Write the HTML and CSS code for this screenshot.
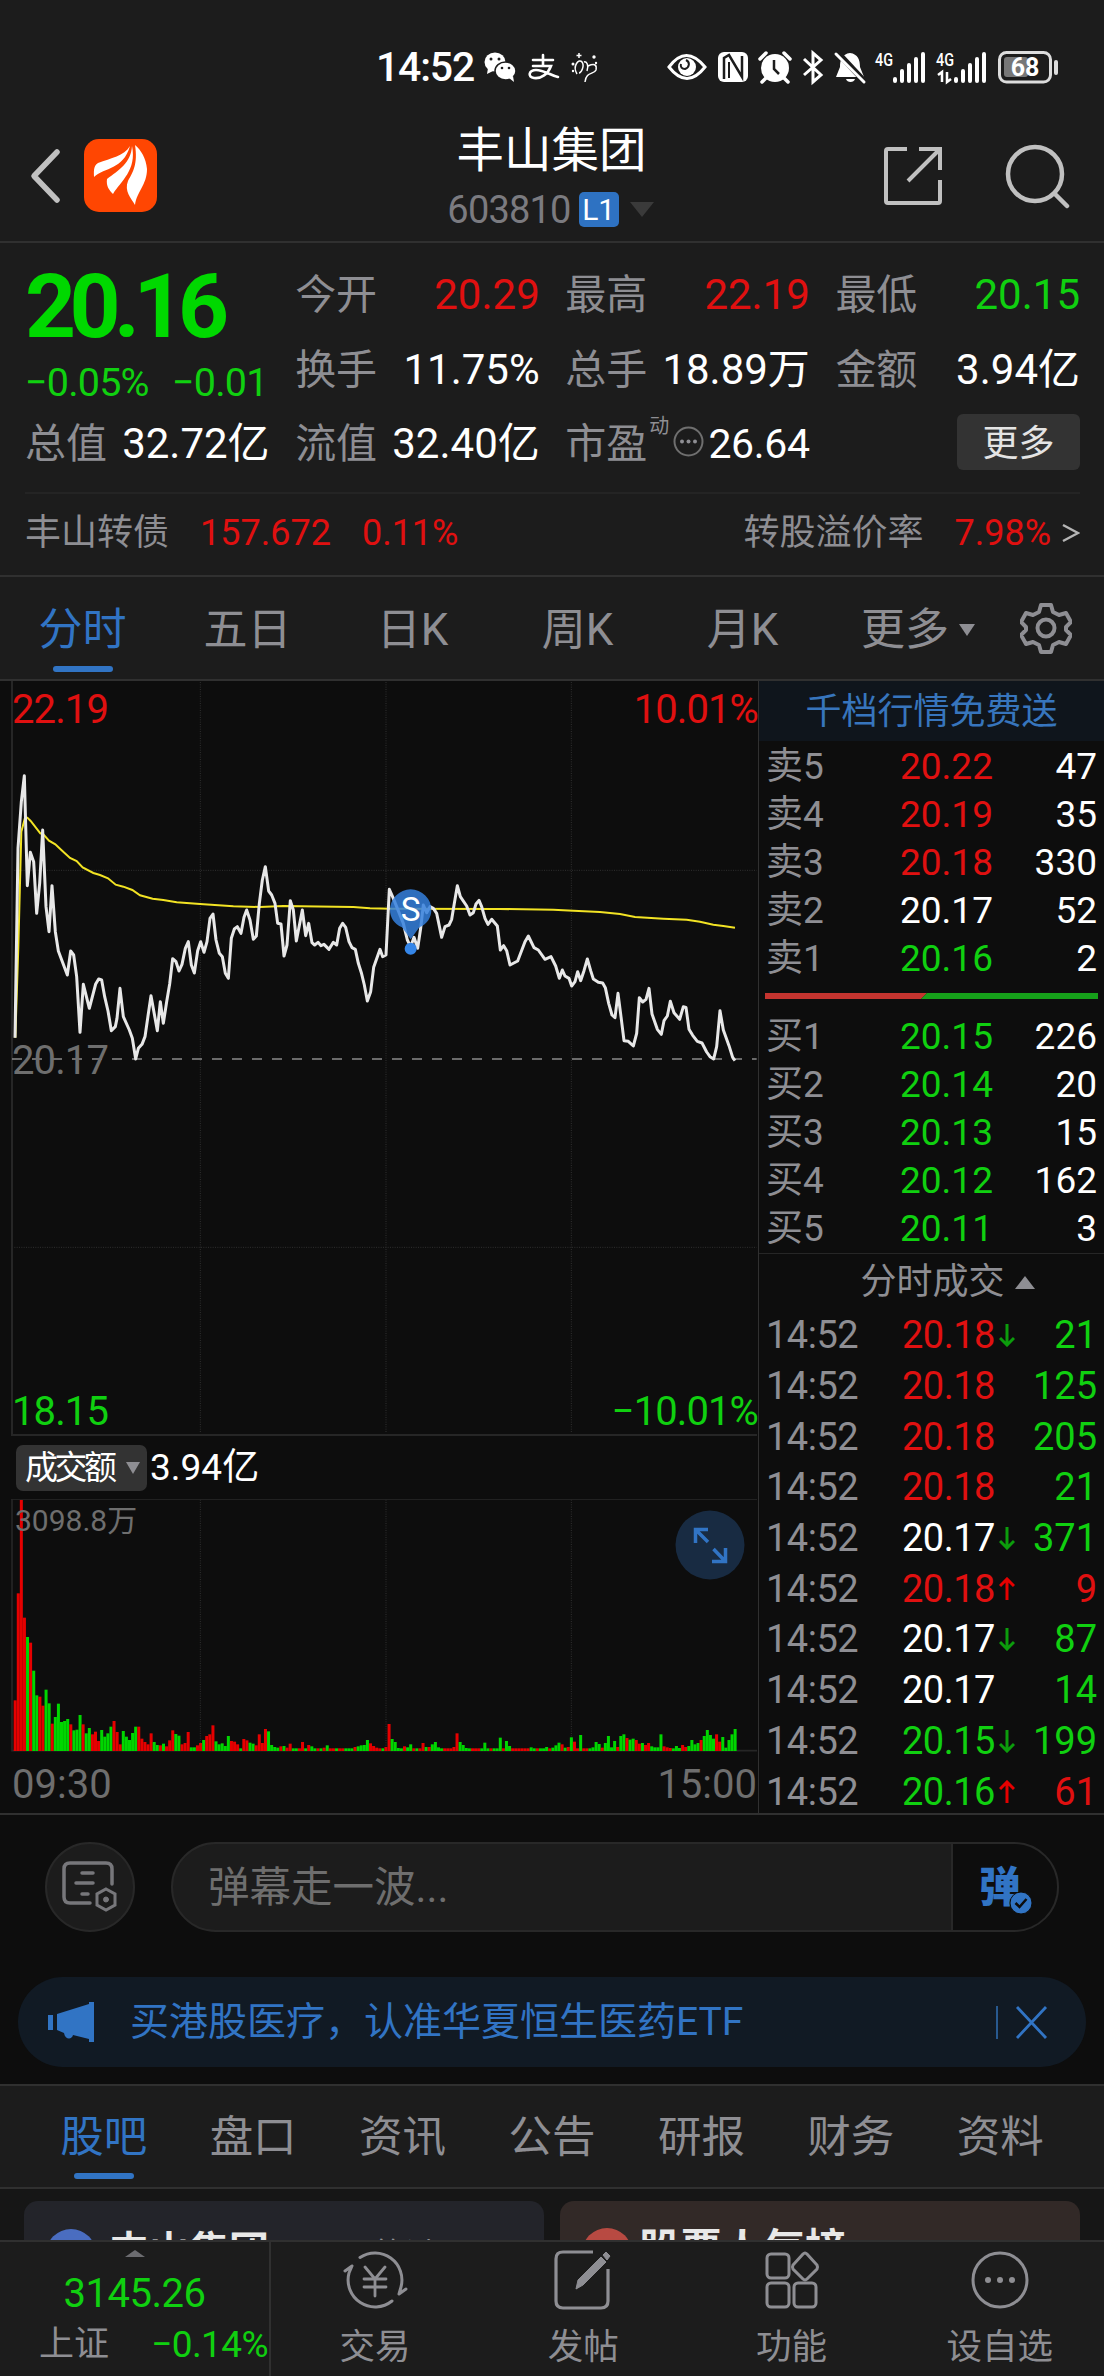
FILE: index.html
```html
<!DOCTYPE html>
<html lang="zh-CN">
<head>
    <meta charset="UTF-8">
    <meta name="viewport" content="width=device-width, initial-scale=1.0">
    <title>丰山集团 603810</title>
    <link rel="stylesheet" href="styles.css">
</head>
<body>
    <div class="statusbar">
        <span class="clock">14:52</span>
        <svg class="status-left" width="120" height="44" viewBox="480 45 120 44">
            <ellipse cx="495" cy="62" rx="10.5" ry="9.5" fill="#fff"/>
            <path d="M488 68l-1 6 6-3z" fill="#fff"/>
            <ellipse cx="505.500" cy="71" rx="10.500" ry="9" fill="#fff" stroke="#1c1c1c" stroke-width="1.500"/>
            <path d="M509 78l5 4-1-6z" fill="#fff"/>
            <g fill="#1c1c1c"><circle cx="491" cy="59" r="1.500"/><circle cx="499" cy="59" r="1.500"/><circle cx="502" cy="68" r="1.300"/><circle cx="509" cy="68" r="1.300"/></g>
            <g fill="none" stroke="#fff" stroke-width="2.600" stroke-linecap="round">
                <path d="M533 60h20M543 55v10M533 66h18c-3 8-10 13-17 12-7-1-5-8 2-8 8 0 14 5 22 7"/>
            </g>
            <g fill="none" stroke="#fff" stroke-width="1.500">
                <path d="M577 74c-5-8 2-16 5-12s-1 11-3 11M584 62c3-1 5 4 3 9M588 66c7-3 9-1 8 4-2 5-10 1-11 12"/>
                <path d="M579 53v5M576.500 55.500h5"/>
            </g>
            <g fill="#fff"><circle cx="573" cy="64" r="1.500"/><circle cx="594" cy="57" r="1.700"/><circle cx="573" cy="71" r="1.200"/><circle cx="596" cy="63" r="1.200"/></g>
        </svg>
        <svg class="status-right" width="400" height="44" viewBox="664 45 400 44">
            <path d="M669 67q17-23 36 0q-18 23-36 0z" fill="none" stroke="#fff" stroke-width="3"/>
            <circle cx="687" cy="67" r="9" fill="#fff"/>
            <path d="M686 60c4 2 4 7-1 9-3 0-5-2-4-5" fill="none" stroke="#1c1c1c" stroke-width="2"/>
            <rect x="718" y="52" width="30" height="30" rx="6" fill="#fff"/>
            <path d="M724 79V58l5-3 13 22 0 0V56" fill="none" stroke="#1c1c1c" stroke-width="2.500"/>
            <path d="M729 62v16" fill="none" stroke="#1c1c1c" stroke-width="2"/>
            <circle cx="775" cy="68" r="14" fill="#fff"/>
            <path d="M774 60v9l5 5" fill="none" stroke="#1c1c1c" stroke-width="2.500"/>
            <path d="M760 59l6-6M790 59l-6-6M766 78l-4 4M784 78l4 4" stroke="#fff" stroke-width="3.500" stroke-linecap="round"/>
            <path d="M804 59l17 16-8 7V53l8 7-17 15" fill="none" stroke="#fff" stroke-width="3"/>
            <path d="M850 53c8 1 10 7 10 14l4 10h-28l4-10c0-7 2-13 10-14z" fill="#fff"/>
            <path d="M846 79h9c-1 4-8 4-9 0z" fill="#fff"/>
            <path d="M837 52l29 31" stroke="#1c1c1c" stroke-width="6"/>
            <path d="M836 54l28 28" stroke="#fff" stroke-width="3" stroke-linecap="round"/>
            <text x="875" y="66" class="net" textLength="18" lengthAdjust="spacingAndGlyphs">4G</text>
            <path d="M895 79v2M902 71v10M909 65v16M916 59v22M923 54v27" stroke="#fff" stroke-width="4" stroke-linecap="round"/>
            <text x="936" y="66" class="net" textLength="18" lengthAdjust="spacingAndGlyphs">4G</text>
            <path d="M956 79v2M963 71v10M970 65v16M977 59v22M984 54v27" stroke="#fff" stroke-width="4" stroke-linecap="round"/>
            <path d="M938 75l4-3v10M951 79l-4 3v-10" fill="none" stroke="#fff" stroke-width="2.500"/>
            <rect x="999.500" y="52.500" width="51" height="29.500" rx="7" fill="none" stroke="#ddd" stroke-width="3"/>
            <rect x="1004" y="57" width="24" height="20" rx="3" fill="#777"/>
            <rect x="1054" y="60" width="4" height="15" rx="2" fill="#ddd"/>
            <text x="1025" y="76" class="battery">68</text>
        </svg>
    </div>

    <header class="header">
        <div class="header-side">
            <svg width="34" height="56" viewBox="0 0 34 56"><path d="M29 4L6 28l23 24" fill="none" stroke="#c0c0c0" stroke-width="5.500" stroke-linecap="round" stroke-linejoin="round"/></svg>
            <svg class="logo" width="73" height="73" viewBox="0 0 73 73">
                <rect width="73" height="73" rx="15" fill="#ff4602"/>
                <path d="M46 7C40 17 27 19 14 24c-5 3-4 9-4 14 11-10 29-7 36-31z" fill="#fff"/>
                <path d="M48 7c-1 17-13 24-25 33-1 7 2 11 6 15 8-13 24-24 19-48z" fill="#fff"/>
                <path d="M51 6c3 19-2 27-7 36-4 10 3 17 7 24 2-14 12-20 12-36-1-11-6-19-12-24z" fill="#fff"/>
            </svg>
        </div>
        <div class="header-title">
            <h1>丰山集团</h1>
            <div class="code">603810<span class="badge">L1</span><i class="tri-down"></i></div>
        </div>
        <div class="header-side right">
            <svg width="60" height="60" viewBox="0 0 60 60" fill="none" stroke="#c0c0c0" stroke-width="4"><path d="M24 3H5q-2 0-2 2v50q0 2 2 2h50q2 0 2-2V34M57 24V3H36M57 3L25 35"/></svg>
            <svg width="66" height="66" viewBox="0 0 66 66" fill="none" stroke="#c0c0c0" stroke-width="4.500" stroke-linecap="round"><circle cx="31" cy="31" r="27"/><path d="M51 51l12 12"/></svg>
        </div>
    </header>

    <section class="quote">
        <div class="quote-grid">
            <div class="price-box green">
                <div class="price">20.16</div>
                <div class="change"><span>−0.05%</span><span>−0.01</span></div>
            </div>
            <div class="item"><label>今开</label><b class="red">20.29</b></div>
            <div class="item"><label>最高</label><b class="red">22.19</b></div>
            <div class="item"><label>最低</label><b class="green">20.15</b></div>
            <div class="item"><label>换手</label><b>11.75%</b></div>
            <div class="item"><label>总手</label><b>18.89万</b></div>
            <div class="item"><label>金额</label><b>3.94亿</b></div>
            <div class="item"><label>总值</label><b>32.72亿</b></div>
            <div class="item"><label>流值</label><b>32.40亿</b></div>
            <div class="item"><label>市盈<sup>动</sup></label>
                <svg class="info" width="31" height="31" viewBox="0 0 31 31"><circle cx="15.500" cy="15.500" r="14" fill="none" stroke="#6f6f6f" stroke-width="2"/><g fill="#8e8e93"><circle cx="9" cy="15.500" r="2"/><circle cx="15.500" cy="15.500" r="2"/><circle cx="22" cy="15.500" r="2"/></g></svg>
                <b class="tight">26.64</b></div>
            <div class="item end"><button class="more">更多</button></div>
        </div>
        <div class="bond">
            <label>丰山转债</label><span class="red">157.672</span><span class="red">0.11%</span>
            <label class="push">转股溢价率</label><span class="red">7.98%</span>
            <svg width="18" height="20" viewBox="0 0 18 20"><path d="M1 2l15 8-15 8" fill="none" stroke="#b5b5b5" stroke-width="2.500"/></svg>
        </div>
    </section>

    <nav class="tabs">
        <a class="tab active">分时</a>
        <a class="tab">五日</a>
        <a class="tab">日K</a>
        <a class="tab">周K</a>
        <a class="tab">月K</a>
        <a class="tab wide">更多<i class="tri-small"></i></a>
        <svg width="52" height="52" viewBox="0 0 52 52" fill="none" stroke="#8e8e93" stroke-width="4" stroke-linejoin="round">
            <path d="M21 3h10l2 7 6 3 7-2 5 9-5 5v3l5 5-5 9-7-2-6 3-2 7H21l-2-7-6-3-7 2-5-9 5-5v-3l-5-5 5-9 7 2 6-3z"/>
            <circle cx="26" cy="26" r="8.500"/>
        </svg>
    </nav>

    <main class="market">
        <div class="charts">
            <div class="chart">
                <svg width="758" height="755" viewBox="0 3 2274 2265">
                    <g class="grid">
                        <path d="M601 6V2260M1158 6V2260M1714 6V2260M36 571H2270M36 1702H2270"/>
                    </g>
                    <path d="M36 3V2265M33 2265H2271" fill="none" stroke="#262626" stroke-width="6"/>
                    <path d="M36 1137H2270" stroke="#8a8a8a" stroke-width="5" stroke-dasharray="30 30"/>
                    <polyline class="avg" points="46,1073 55,800 64,455 75,413 82,413 92,423 121,460 130,463 147,482 166,493 184,510 210,534 230,543 248,562 280,579 300,585 324,595 347,614 370,620 397,630 420,646 458,656 490,660 530,667 600,672 700,679 780,681 850,678 1060,681 1110,685 1170,686 1500,687 1660,689 1720,692 1800,696 1860,702 1905,711 1990,716 2060,719 2100,725 2140,734 2170,738 2205,743"/>
                    <polyline class="line" points="45,1073 54,505 64,365 73,287 82,617 91,517 101,545 110,700 119,610 128,450 138,680 147,755 156,617 166,755 175,813 202,885 212,813 221,825 230,890 240,1057 250,913 268,985 287,912 296,897 305,900 314,950 324,993 334,1052 346,1040 351,1015 360,925 370,1010 388,1050 397,1075 407,1137 415,1105 426,1093 435,1070 444,1008 453,947 472,1052 481,965 490,1030 500,965 509,912 518,836 528,845 537,873 546,853 556,805 565,785 574,855 583,879 593,812 602,785 612,817 621,785 630,715 639,702 648,780 658,820 667,830 676,880 685,895 694,775 703,747 712,740 723,760 732,712 740,690 750,720 760,778 769,768 778,670 787,600 796,560 806,633 815,645 825,670 833,730 843,732 852,828 861,795 871,662 880,690 889,783 907,690 917,767 926,730 936,788 944,795 954,787 963,797 972,793 987,808 1000,787 1010,795 1019,745 1028,730 1037,742 1047,785 1056,803 1066,808 1075,850 1084,878 1093,915 1102,963 1112,935 1121,862 1140,808 1148,830 1158,825 1168,628 1180,655 1198,700 1210,730 1222,780 1232,800 1242,772 1253,805 1262,745 1270,675 1280,698 1290,680 1300,685 1310,700 1325,772 1335,740 1347,735 1355,718 1363,670 1372,617 1381,650 1400,678 1410,705 1420,698 1428,672 1437,661 1445,680 1455,715 1464,733 1475,718 1492,738 1501,810 1511,797 1520,812 1530,855 1553,843 1575,785 1585,768 1602,803 1615,810 1635,838 1653,830 1667,858 1678,895 1687,870 1695,888 1707,895 1715,918 1725,905 1733,875 1742,902 1752,872 1762,837 1772,872 1780,897 1795,907 1808,909 1816,923 1826,970 1836,1005 1845,1013 1854,940 1863,1010 1872,1082 1885,1084 1900,1098 1910,1060 1918,953 1928,966 1938,958 1947,925 1956,1002 1972,1048 1984,1063 1992,1022 2002,1008 2011,964 2022,998 2039,1018 2050,980 2058,982 2067,1048 2078,1066 2092,1084 2106,1089 2120,1116 2130,1130 2141,1137 2150,1100 2160,992 2170,1050 2187,1097 2198,1132 2205,1142"/>
                    <path d="M1232 778L1206 742C1182 732 1170 712 1170 690a62 62 0 0 1 124 0c0 22-12 42-36 52z" fill="#3580dd" fill-opacity=".85"/>
                    <circle cx="1232" cy="806" r="18" fill="#3586e8"/>
                    <text x="1232" y="724" class="mark">S</text>
                </svg>
                <span class="scale red top-left">22.19</span>
                <span class="scale red top-right">10.01%</span>
                <span class="scale mid-left">20.17</span>
                <span class="scale green bottom-left">18.15</span>
                <span class="scale green bottom-right">−10.01%</span>
            </div>
            <div class="vol-head">
                <span class="picker"><em>成交额</em><i class="tri-small"></i></span>
                <span>3.94亿</span>
            </div>
            <div class="volume">
                <svg width="758" height="253" viewBox="0 298 2274 759">
                    <path class="grid" d="M601 300V1050M1158 300V1050M1714 300V1050"/>
                    <path d="M33 299H2271" stroke="#262626" stroke-width="3"/>
                    <path d="M36 298V1053H2271" fill="none" stroke="#262626" stroke-width="5"/>
                    <g id="bars"></g>
                </svg>
                <span class="vol-max">3098.8万</span>
                <svg class="expand" width="70" height="70" viewBox="0 0 70 70">
                    <circle cx="35" cy="35" r="34.500" fill="#182b42"/>
                    <path d="M33 19.500H20.500V33M21 20l12 12M37 51.500H50.500V38M50 51L38.500 39" fill="none" stroke="#3174c4" stroke-width="3.500"/>
                </svg>
            </div>
            <div class="time-axis"><span>09:30</span><span>15:00</span></div>
        </div>

        <aside class="book">
            <div class="book-banner">千档行情免费送</div>
            <ul class="levels">
                <li><label>卖5</label><span class="red">20.22</span><b>47</b></li>
                <li><label>卖4</label><span class="red">20.19</span><b>35</b></li>
                <li><label>卖3</label><span class="red">20.18</span><b>330</b></li>
                <li><label>卖2</label><span>20.17</span><b>52</b></li>
                <li><label>卖1</label><span class="green">20.16</span><b>2</b></li>
            </ul>
            <svg class="ratio" width="333" height="6" viewBox="0 0 333 6"><path d="M0 0H162L156 6H0z" fill="#c4342f"/><path d="M162 0H333V6H156z" fill="#16a01a"/></svg>
            <ul class="levels">
                <li><label>买1</label><span class="green">20.15</span><b>226</b></li>
                <li><label>买2</label><span class="green">20.14</span><b>20</b></li>
                <li><label>买3</label><span class="green">20.13</span><b>15</b></li>
                <li><label>买4</label><span class="green">20.12</span><b>162</b></li>
                <li><label>买5</label><span class="green">20.11</span><b>3</b></li>
            </ul>
            <div class="deals-title">分时成交<i class="tri-up"></i></div>
            <ul class="deals" id="deals"></ul>
        </aside>
    </main>

    <section class="danmu">
        <div class="danmu-row">
            <div class="round-btn">
                <svg width="56" height="52" viewBox="0 0 56 52" fill="none" stroke="#77777b" stroke-width="3.500" stroke-linecap="round">
                    <path d="M50 23V8q0-6-6-6H8Q2 2 2 8v28q0 6 6 6h20M20 12h11M14 22h17M20 33h6"/>
                    <path d="M44 28l9 5v11l-9 5-9-5V33z" stroke-width="3"/><circle cx="44" cy="38.500" r="2.500" fill="#77777b" stroke-width="1"/>
                </svg>
            </div>
            <div class="danmu-input">
                <span>弹幕走一波...</span>
                <div class="danmu-switch">弹<svg width="24" height="24" viewBox="-1 -1 24 24"><circle cx="11" cy="11" r="11" fill="#3174c4" stroke="#0d0d0d" stroke-width="1"/><path d="M5.500 11l4 4 7-8" fill="none" stroke="#0d0d0d" stroke-width="2.500"/></svg></div>
            </div>
        </div>
        <div class="notice">
            <svg width="46" height="40" viewBox="0 0 46 40" fill="#3174c4"><path d="M0 13h5v15H0zM9 12L41 2V0h5v40h-5v-3l-16-4c-1 5-8 5-9-2l-7-3z"/></svg>
            <span>买港股医疗，认准华夏恒生医药ETF</span>
            <div class="close"><svg width="33" height="33" viewBox="0 0 33 33"><path d="M2 1l29 31M31 1L2 32" stroke="#3174c4" stroke-width="2.800"/></svg></div>
        </div>
    </section>

    <nav class="subtabs">
        <a class="active">股吧</a><a>盘口</a><a>资讯</a><a>公告</a><a>研报</a><a>财务</a><a>资料</a>
    </nav>
    <div class="cards">
        <div class="card blue"><i></i><b>丰山集团</b><small>等讨</small></div>
        <div class="card brown"><i></i><b>股票人气榜</b></div>
    </div>

    <footer class="bottombar">
        <div class="index">
            <i class="tri-up"></i>
            <div class="index-value green">3145.26</div>
            <div class="index-row"><label>上证</label><span class="green">−0.14%</span></div>
        </div>
        <a class="action">
            <svg width="66" height="62" viewBox="0 0 66 62" fill="none" stroke="#8e8e93" stroke-width="3" stroke-linecap="round" stroke-linejoin="round">
                <path d="M18 8.500A27 27 0 0 1 59 38L57 45l7-5"/>
                <path d="M50 52A27 27 0 0 1 7 24L10 17l-7 5"/>
                <path d="M23 18l10 12 10-12M33 30v17M22 30h22M22 38h22" stroke-width="2.800"/>
            </svg>交易</a>
        <a class="action">
            <svg width="62" height="62" viewBox="0 0 62 62" fill="none" stroke="#8e8e93" stroke-width="3.200">
                <path d="M41 3H11q-7 0-7 7v42q0 7 7 7h38q7 0 7-7V20"/>
                <path d="M24 40l2-9L49 8l5 5-23 23zM51 6l3-3 4 4-3 4z" fill="#8e8e93" stroke-width="1"/>
            </svg>发帖</a>
        <a class="action">
            <svg width="56" height="62" viewBox="0 0 56 62" fill="none" stroke="#8e8e93" stroke-width="3">
                <rect x="3" y="5" width="22" height="24" rx="4"/><rect x="3" y="34" width="22" height="24" rx="4"/><rect x="30" y="34" width="22" height="24" rx="4"/>
                <path d="M39 5q2-2 4 0l10 11q1 2 0 4L43 30q-2 2-4 0L29 20q-1-2 0-4z"/>
            </svg>功能</a>
        <a class="action">
            <svg width="60" height="62" viewBox="0 0 60 62"><circle cx="30" cy="31" r="27" fill="none" stroke="#8e8e93" stroke-width="3"/><g fill="#8e8e93"><circle cx="18" cy="31" r="3"/><circle cx="30" cy="31" r="3"/><circle cx="42" cy="31" r="3"/></g></svg>设自选</a>
    </footer>

    <script>
        // one bar per minute: r = up, g = down
        const volume = 'r152 r473 r753 r400 g342 r325 g241 g167 r163 r136 g184 g143 r82 g102 g142 g87 g90 g96 r80 g62 g64 g108 r80 g53 g69 r50 r58 r30 g63 g43 g53 g73 r90 r57 r20 g60 g43 g33 g54 g73 r73 r37 r27 r20 r53 g27 g18 r17 g22 r14 r32 r62 g51 g46 r20 r24 r57 g11 g11 r17 r24 g33 r45 r50 r77 g29 g20 g23 g15 g45 r30 r28 r20 g8 r36 r32 g25 g22 r17 r50 r24 r66 g59 g18 g12 g10 r14 g15 r10 r22 g8 g8 r8 r27 g8 r18 g14 g8 r8 g8 r10 g17 r8 r8 g8 r8 r8 g8 g8 g8 r12 g14 g17 g18 g33 r23 r15 r10 r8 g8 r12 r81 g36 g27 g9 g8 r14 g11 g20 r8 g8 r8 r24 g12 r12 g20 g27 g11 g8 r8 r8 r8 r12 r53 g27 g18 g9 g8 r8 r8 r8 g8 g25 g8 r8 g8 g8 g40 r8 g30 g15 r8 r8 r8 r8 r8 r8 g11 g8 r8 g8 g8 g12 r8 g10 g17 g25 r20 g10 r12 g41 r28 r8 g48 r8 r8 g8 g11 g27 g21 r10 g24 g45 g11 g30 r12 g45 g50 r39 g34 g37 r33 r22 g24 r18 r24 g14 g11 g11 g50 r14 r11 r9 g8 g15 g9 r18 r12 g15 g33 g20 g24 r33 g45 g63 g48 g37 r50 r28 g42 g10 g33 g50 g66'.split(' ');
        document.getElementById('bars').innerHTML = volume.map((v, i) => {
            const h = Number(v.slice(1));
            const x = (41 + i * 9.27).toFixed(1);
            return `<rect x="${x}" y="${1054 - h}" width="9" height="${h}" fill="${v[0] === 'r' ? '#e60000' : '#00d600'}"/>`;
        }).join('');

        const deals = [
            ['20.18', 'red', 'down', '21', 'green'],
            ['20.18', 'red', '', '125', 'green'],
            ['20.18', 'red', '', '205', 'green'],
            ['20.18', 'red', '', '21', 'green'],
            ['20.17', '', 'down', '371', 'green'],
            ['20.18', 'red', 'up', '9', 'red'],
            ['20.17', '', 'down', '87', 'green'],
            ['20.17', '', '', '14', 'green'],
            ['20.15', 'green', 'down', '199', 'green'],
            ['20.16', 'green', 'up', '61', 'red']
        ];
        const arrows = {
            down: '<svg width="16" height="24" viewBox="0 0 16 24" fill="none" stroke="#0c9c0c" stroke-width="3"><path d="M8 1v21M1 15l7 7 7-7"/></svg>',
            up: '<svg width="16" height="24" viewBox="0 0 16 24" fill="none" stroke="#e60000" stroke-width="3"><path d="M8 23V2M1 9l7-7 7 7"/></svg>',
            '': ''
        };
        document.getElementById('deals').innerHTML = deals.map(d =>
            `<li><label>14:52</label><span class="${d[1]}">${d[0]}${arrows[d[2]]}</span><b class="${d[4]}">${d[3]}</b></li>`
        ).join('');
    </script>
</body>
</html>
```

FILE: styles.css
```css
* {
    box-sizing: border-box;
}
body {
    margin: 0;
    width: 1104px;
    height: 2376px;
    overflow: hidden;
    display: flex;
    flex-direction: column;
    background: #1c1c1c;
    color: #fff;
    font-family: Roboto, "Noto Sans CJK SC", sans-serif;
}
ul {
    list-style: none;
    margin: 0;
    padding: 0;
}
svg {
    display: block;
    flex: none;
}
b, em, i, h1 {
    font-weight: 400;
    font-style: normal;
}
label {
    color: #8e8e93;
}

/* triangles */
.tri-down, .tri-small, .tri-up {
    display: inline-block;
    border: 8px solid transparent;
    border-bottom: 0;
    border-top: 12px solid #8e8e93;
}
.tri-down {
    border-width: 15px 12px 0;
    border-top-color: #3a3a3a;
}
.tri-up {
    border: 10.5px solid transparent;
    border-top: 0;
    border-bottom: 13px solid #8e8e93;
}

/* status bar */
.statusbar {
    height: 110px;
    padding: 45px 0 0 376px;
    display: flex;
}
.clock {
    width: 104px;
    font-size: 41px;
    font-weight: 500;
    line-height: 45px;
    letter-spacing: -1.2px;
}
.status-left {
    margin-right: 64px;
}
.net {
    fill: #fff;
    font-size: 19px;
    font-weight: 500;
}
.battery {
    fill: #fff;
    font-size: 25px;
    font-weight: 700;
    text-anchor: middle;
}

/* header */
.header {
    height: 133px;
    padding: 0 34px 0 28px;
    display: flex;
    justify-content: space-between;
    border-bottom: 2px solid #303030;
}
.header-side {
    width: 240px;
    height: 131px;
    display: flex;
    align-items: center;
}
.logo {
    margin-left: 22px;
}
.header-side.right {
    justify-content: flex-end;
    gap: 61px;
}
.header-title {
    display: flex;
    flex-direction: column;
    align-items: center;
    padding: 10px 0 0 5px;
}
.header-title h1 {
    margin: 0;
    font-size: 47.5px;
    line-height: 62px;
}
.code {
    display: flex;
    align-items: center;
    height: 55px;
    font-size: 38px;
    letter-spacing: -.8px;
    color: #7b7b80;
    margin-left: -2px;
}
.badge {
    width: 40px;
    height: 35px;
    margin: 0 11px 0 8px;
    border-radius: 5px;
    background: #2e72c2;
    color: #fff;
    font-size: 30px;
    line-height: 35px;
    text-align: center;
    letter-spacing: 0;
}

/* quote */
.quote {
    height: 334px;
    padding: 15px 24px 0 25px;
    border-bottom: 2px solid #303030;
}
.quote-grid {
    display: grid;
    grid-template-columns: repeat(4, 1fr);
    grid-template-rows: repeat(3, 74.6px);
    column-gap: 25.5px;
    height: 234px;
}
.price-box {
    grid-row: span 2;
}
.price {
    height: 98px;
    font-size: 89px;
    font-weight: 700;
    line-height: 98px;
    letter-spacing: -6.5px;
    color: #00d800;
}
.change {
    display: flex;
    justify-content: space-between;
    padding-right: 2px;
    font-size: 39.5px;
    line-height: 53px;
    letter-spacing: -.8px;
}
.item {
    display: flex;
    align-items: center;
    justify-content: space-between;
    white-space: nowrap;
    font-size: 41px;
    line-height: 60px;
}
.item b {
    font-size: 42px;
}
.item .tight {
    font-size: 41px;
    letter-spacing: -.3px;
}
.item sup {
    display: inline-block;
    font-size: 20px;
    line-height: 20px;
    vertical-align: 25px;
    margin-left: 2px;
}
.info {
    margin: -6px 0 0 0;
}
.item.end {
    justify-content: flex-end;
}
.more {
    width: 123px;
    height: 56px;
    margin-top: -4px;
    padding: 0 0 4px;
    border: 0;
    border-radius: 6px;
    background: #333;
    color: #e4e4e4;
    font: 36px Roboto, "Noto Sans CJK SC", sans-serif;
}
.bond {
    display: flex;
    align-items: center;
    height: 80px;
    border-top: 2px solid #242424;
    font-size: 36px;
    line-height: 50px;
}
.bond .red {
    margin-left: 31px;
}
.bond .push {
    margin-left: auto;
}
.bond svg {
    margin-left: 11px;
}

/* period tabs */
.tabs {
    display: flex;
    align-items: center;
    height: 104px;
    border-bottom: 2px solid #303030;
}
.tab {
    width: 165px;
    height: 102px;
    line-height: 106px;
    text-align: center;
    font-size: 44px;
    color: #8e8e93;
}
.tab.wide {
    width: 195px;
    padding-right: 9px;
}
.tab .tri-small {
    margin-left: 10px;
    vertical-align: 9px;
}
.active {
    color: #3174c4;
}
.active::after {
    content: "";
    display: block;
    width: 60px;
    height: 6px;
    margin: -17px auto 0;
    border-radius: 3px;
    background: #3174c4;
}

/* charts */
.market {
    display: flex;
    height: 1134px;
    background: #0d0d0d;
    border-bottom: 2px solid #303030;
}
.charts {
    width: 759px;
    border-right: 1px solid #303030;
}
.chart, .volume {
    position: relative;
}
.grid {
    fill: none;
    stroke: #303030;
    stroke-width: 3;
    stroke-dasharray: 3 4;
}
.avg {
    fill: none;
    stroke: #f2e324;
    stroke-width: 6;
}
.line {
    fill: none;
    stroke: #e8e8e8;
    stroke-width: 9;
    stroke-linejoin: round;
}
.mark {
    fill: #fff;
    font-size: 100px;
    text-anchor: middle;
}
.scale {
    position: absolute;
    font-size: 40px;
    line-height: 44px;
    letter-spacing: -.9px;
    color: #6e6e6e;
}
.top-left {
    left: 12px;
    top: 7px;
}
.top-right {
    right: 0;
    top: 7px;
}
.mid-left {
    left: 12px;
    top: 358px;
}
.bottom-left {
    left: 12px;
    bottom: 2px;
}
.bottom-right {
    right: 0;
    bottom: 2px;
}
.vol-head {
    display: flex;
    align-items: center;
    gap: 3px;
    height: 63px;
    padding: 0 0 0 16px;
    font-size: 37px;
    line-height: 46px;
}
.picker {
    display: flex;
    align-items: center;
    gap: 12px;
    width: 131px;
    height: 46px;
    padding-left: 9px;
    border-radius: 7px;
    background: #333;
    font-size: 33px;
}
.picker em {
    letter-spacing: -3.5px;
}
.picker .tri-small {
    border-width: 12px 7.5px 0;
}
.vol-max {
    position: absolute;
    left: 15px;
    top: 4px;
    font-size: 30px;
    line-height: 36px;
    color: #6e6e6e;
}
.expand {
    position: absolute;
    left: 675px;
    top: 11px;
}
.time-axis {
    display: flex;
    justify-content: space-between;
    padding: 0 1px 0 12px;
    font-size: 40px;
    line-height: 65px;
    color: #6e6e6e;
}

/* order book */
.book {
    flex: 1;
}
.book-banner {
    height: 60px;
    background: #0f151c;
    color: #3775bd;
    font-size: 36px;
    line-height: 62px;
    text-align: center;
}
.levels li, .deals li {
    display: grid;
    grid-template-columns: 134px 1fr auto;
    align-items: center;
    height: 48px;
    padding: 0 7px;
    font-size: 37px;
    line-height: 48px;
}
.levels {
    padding-top: 2px;
}
.ratio {
    margin: 10px 0 12px 6px;
}
.deals-title {
    display: flex;
    align-items: center;
    justify-content: center;
    gap: 10px;
    height: 57px;
    padding-left: 32px;
    border-top: 1px solid #262626;
    font-size: 36px;
    line-height: 56px;
    color: #8e8e93;
}
.deals li {
    height: 50.7px;
    grid-template-columns: 136px 1fr auto;
    font-size: 38px;
}
.deals label, .deals span {
    letter-spacing: -.5px;
}
.deals span {
    display: flex;
    align-items: center;
    gap: 4px;
}

/* comment bar */
.danmu {
    height: 269px;
    padding: 27px 18px 0;
    background: #0d0d0d;
}
.danmu-row {
    display: flex;
    gap: 36px;
    padding: 0 27px;
}
.round-btn {
    display: flex;
    align-items: center;
    justify-content: center;
    width: 90px;
    height: 90px;
    border: 2px solid #282828;
    border-radius: 50%;
    background: #1c1c1c;
}
.danmu-input {
    display: flex;
    width: 888px;
    height: 90px;
    overflow: hidden;
    border: 2px solid #282828;
    border-radius: 45px;
    background: #1c1c1c;
    color: #6e6e6e;
    font-size: 41.5px;
    line-height: 87px;
}
.danmu-input span {
    flex: 1;
    padding-left: 35px;
}
.danmu-switch {
    position: relative;
    width: 106px;
    padding-left: 26px;
    border-left: 2px solid #282828;
    background: #0d0d0d;
    color: #3174c4;
    font-weight: 900;
}
.danmu-switch svg {
    position: absolute;
    left: 56px;
    top: 47px;
}
.notice {
    display: flex;
    align-items: center;
    height: 90px;
    margin-top: 45px;
    padding: 0 38px 0 30px;
    border-radius: 45px;
    background: #111a24;
    color: #3174c4;
    font-size: 39px;
    line-height: 90px;
}
.notice span {
    margin-left: 36px;
    flex: 1;
}
.close {
    padding-left: 17px;
    border-left: 2px solid #28598f;
}

/* section tabs */
.subtabs {
    display: flex;
    height: 105px;
    padding: 0 29px;
    border-top: 2px solid #303030;
    border-bottom: 2px solid #303030;
}
.subtabs a {
    flex: 1;
    height: 101px;
    text-align: center;
    font-size: 43.5px;
    line-height: 104px;
    color: #8e8e93;
}
.subtabs .active {
    color: #3174c4;
}
.cards {
    display: flex;
    gap: 16px;
    height: 51px;
    padding: 12px 24px 0;
    overflow: hidden;
    background: #161616;
}
.card {
    display: flex;
    align-items: center;
    flex: 1;
    height: 106px;
    padding-left: 22px;
    border-radius: 14px;
    background: #23242a;
    color: #e8e8e8;
    font-size: 40px;
    line-height: 60px;
}
.card b {
    font-weight: 700;
    margin: -4px 0 0 13px;
}
.card i {
    width: 50px;
    height: 50px;
    border-radius: 50%;
    background: #4a6dc0;
}
.card small {
    margin-left: 106px;
    font-size: 30px;
    color: #8e8e93;
}
.card.brown {
    background: #322927;
    font-size: 41.5px;
}
.card.brown b {
    margin: -9px 0 0 7px;
}
.card.brown i {
    margin-top: -3px;
    background: #b84a42;
}

/* bottom bar */
.bottombar {
    display: flex;
    height: 136px;
    border-top: 2px solid #303030;
    background: #1c1c1c;
}
.index {
    width: 271px;
    border-right: 2px solid #303030;
    padding-top: 8px;
    display: flex;
    flex-direction: column;
    align-items: center;
}
.index .tri-up {
    border-width: 0 10.5px 7px;
    border-bottom-color: #6c6c70;
}
.index-value {
    font-size: 40px;
    line-height: 74px;
    letter-spacing: -.5px;
}
.index-row {
    display: flex;
    align-self: stretch;
    justify-content: space-between;
    padding: 0 1px 0 39px;
    font-size: 35px;
    line-height: 28px;
}
.index-row span {
    font-size: 37px;
    letter-spacing: -.6px;
}
.action {
    flex: 1;
    display: flex;
    flex-direction: column;
    align-items: center;
    padding-top: 7px;
    font-size: 35.5px;
    line-height: 72px;
    color: #8e8e93;
}

/* price direction, after the component colours so it wins over them */
.red {
    color: #e01010;
}
.green {
    color: #10d010;
}
```
